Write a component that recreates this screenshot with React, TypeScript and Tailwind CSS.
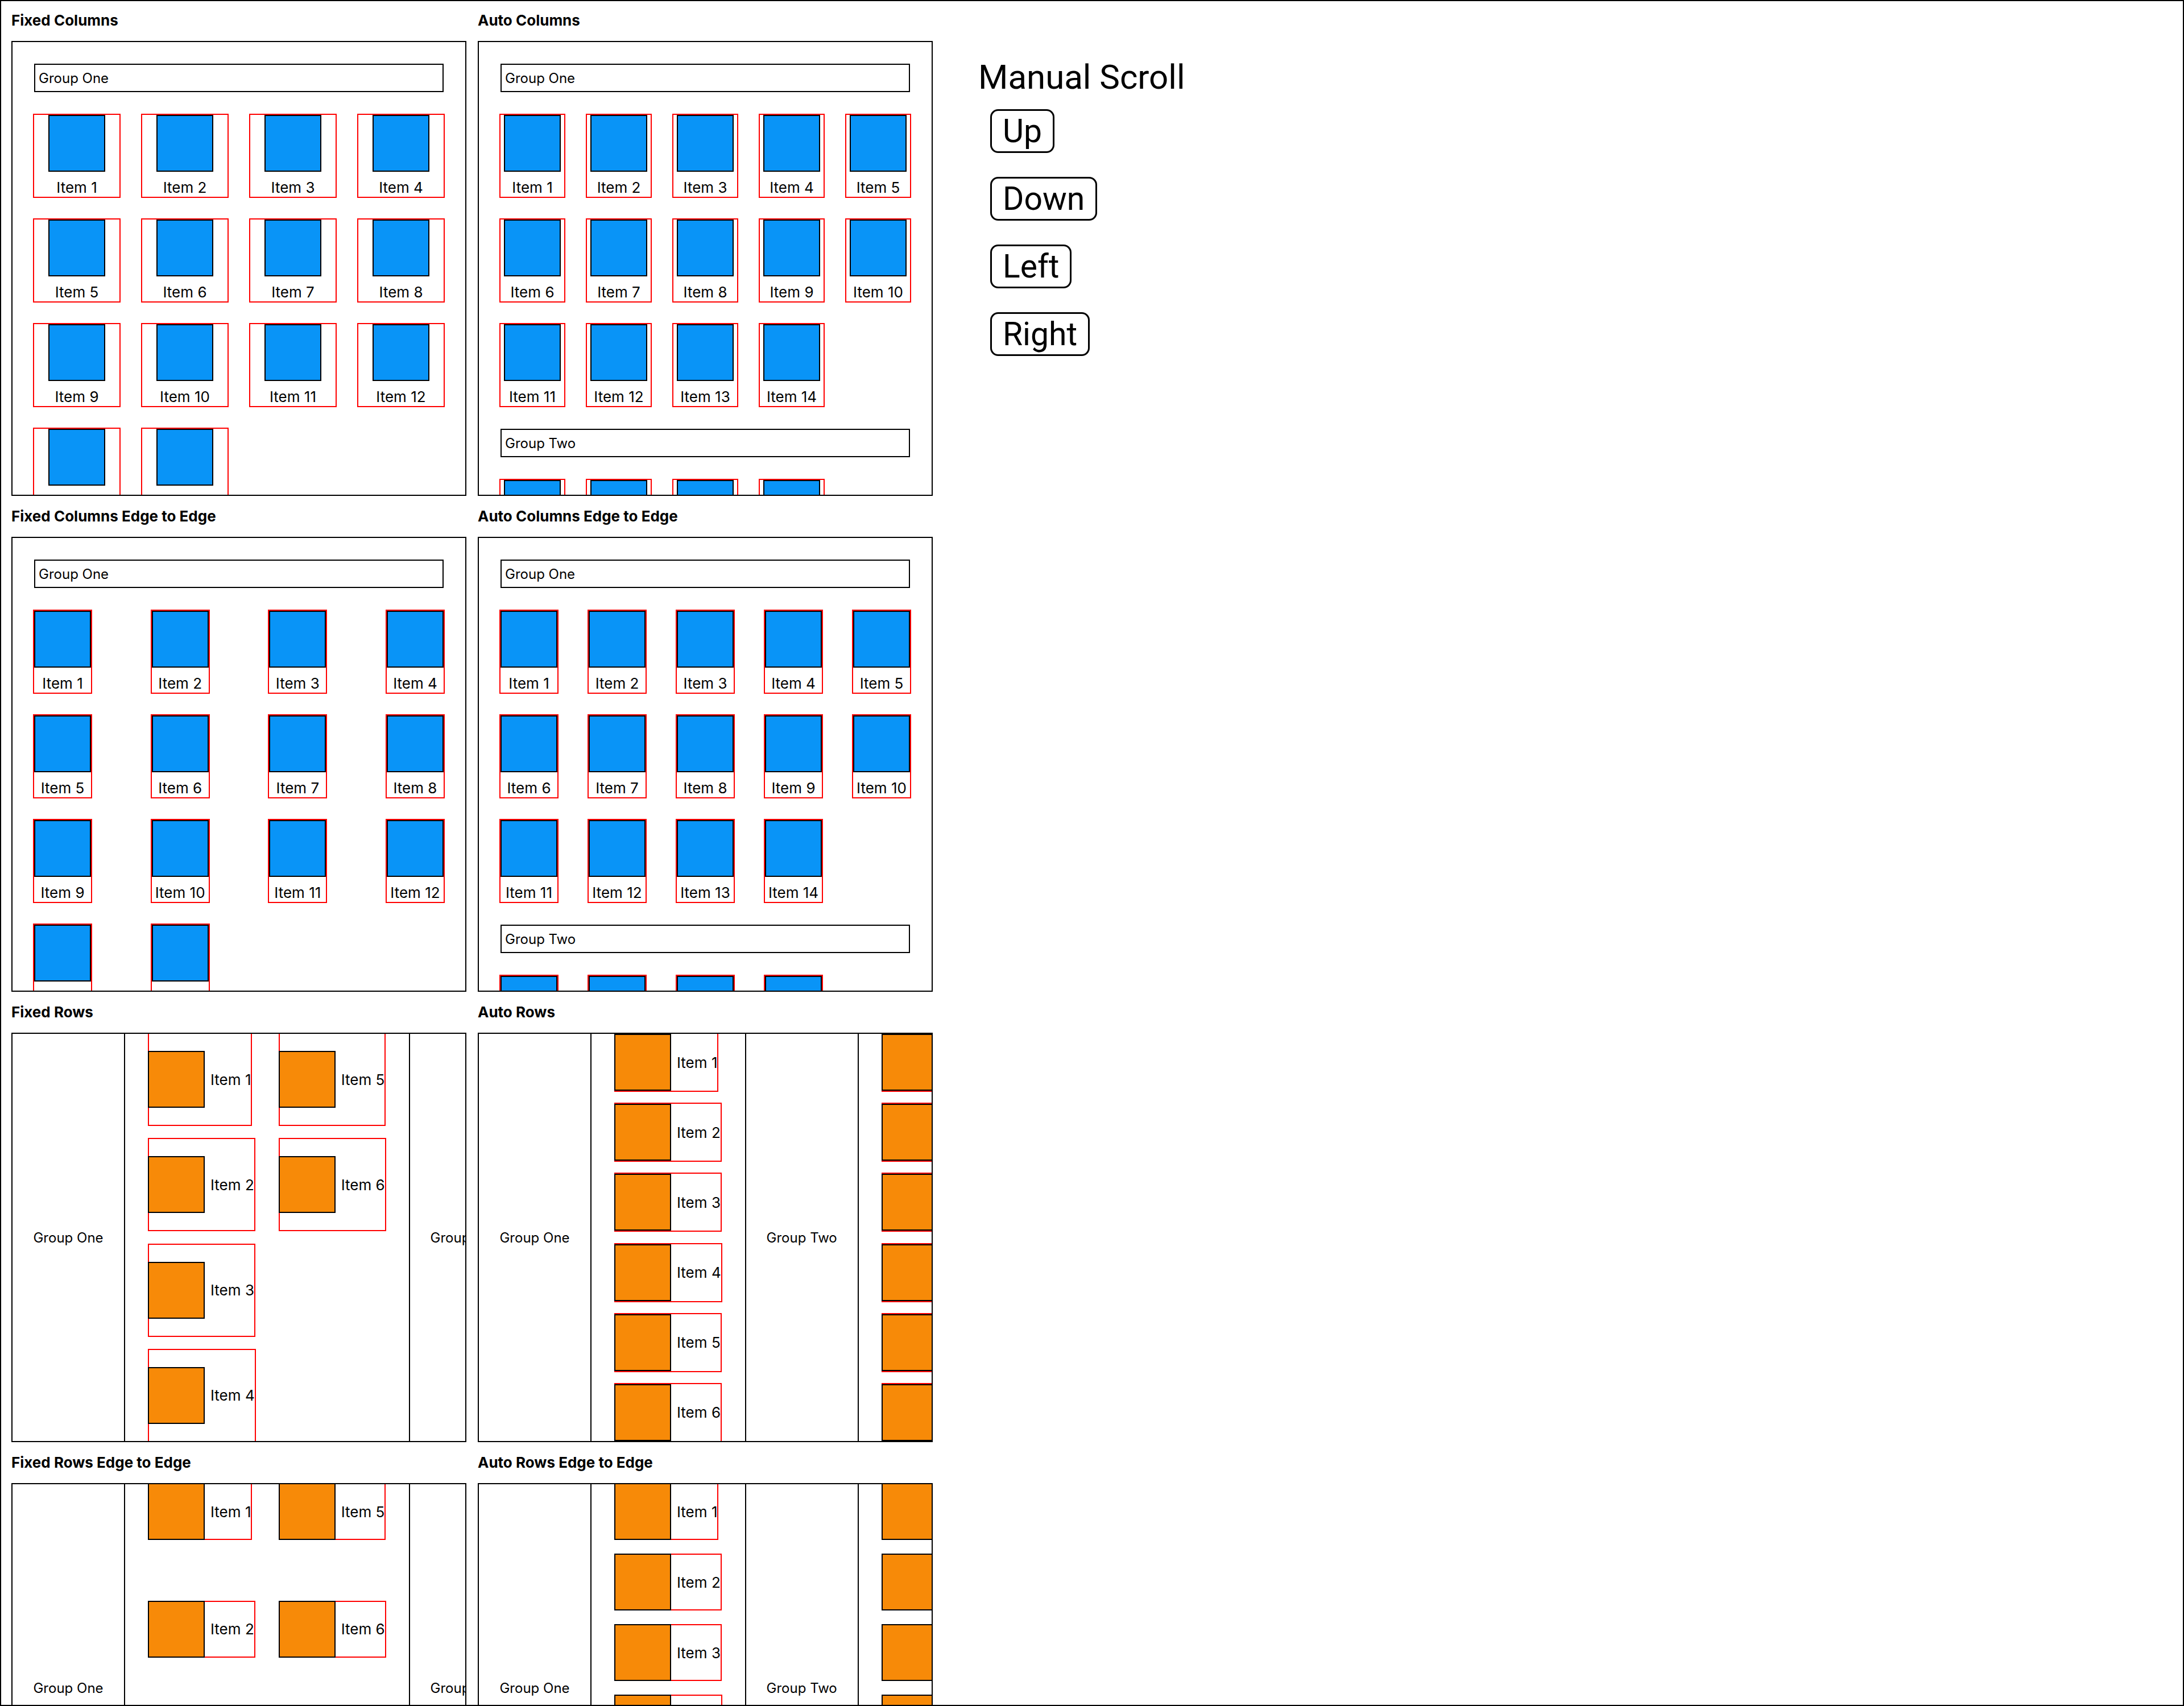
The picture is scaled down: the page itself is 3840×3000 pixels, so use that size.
import React from "react";

const range = (n: number) => Array.from({ length: n }, (_, i) => i + 1);

type ColMode = "fixed" | "auto" | "fixedEdge" | "autoEdge";
type RowMode = "fixed" | "auto" | "fixedEdge" | "autoEdge";

function BlueSquare() {
  return <div className="h-[100px] w-[100px] shrink-0 border-2 border-black bg-[#0994f7]" />;
}

function OrangeSquare() {
  return <div className="-ml-[2px] h-[100px] w-[100px] shrink-0 border-2 border-black bg-[#f78a08]" />;
}

function ColItem({ n, edge }: { n: number; edge: boolean }) {
  return (
    <div
      className={
        edge
          ? "flex h-[144px] w-[100px] flex-col items-center outline-2 outline-[#ff0000]"
          : "flex h-[144px] flex-col items-center outline-2 outline-[#ff0000]"
      }
    >
      <BlueSquare />
      <div className="whitespace-nowrap pt-[12px] text-[26px] leading-[31px] text-black">Item {n}</div>
    </div>
  );
}

function ColHeader({ children }: { children: React.ReactNode }) {
  return (
    <div className="flex h-[50px] items-center border-2 border-black px-[6px] text-[24px] leading-[29px] text-black">
      {children}
    </div>
  );
}

function ColGrid({ mode, count }: { mode: ColMode; count: number }) {
  const cls =
    mode === "fixed"
      ? "grid grid-cols-[repeat(4,150px)] gap-10"
      : mode === "auto"
      ? "grid grid-cols-5 gap-10"
      : mode === "fixedEdge"
      ? "grid grid-cols-[repeat(4,100px)] justify-between gap-y-10"
      : "grid grid-cols-[repeat(5,100px)] justify-between gap-y-10";
  const edge = mode === "fixedEdge" || mode === "autoEdge";
  return (
    <div className={cls}>
      {range(count).map((n) => (
        <ColItem key={n} n={n} edge={edge} />
      ))}
    </div>
  );
}

function ColPanel({ mode }: { mode: ColMode }) {
  return (
    <div className="h-[800px] w-[800px] overflow-hidden border-2 border-black">
      <div className="flex flex-col gap-10 p-[38px]">
        <ColHeader>Group One</ColHeader>
        <ColGrid mode={mode} count={14} />
        <ColHeader>Group Two</ColHeader>
        <ColGrid mode={mode} count={4} />
      </div>
    </div>
  );
}

function RowItem({ n, mode }: { n: number; mode: RowMode }) {
  const h =
    mode === "fixed"
      ? "flex h-[164px] items-center border-2 border-[#ff0000]"
      : mode === "auto"
      ? "flex h-[104px] items-center border-2 border-[#ff0000]"
      : "flex h-[100px] items-center border-2 border-[#ff0000]";
  return (
    <div className={h}>
      <OrangeSquare />
      <div className="whitespace-nowrap pl-[10px] text-[26px] leading-[31px] text-black">Item {n}</div>
    </div>
  );
}

function RowHeader({ children }: { children: React.ReactNode }) {
  return (
    <div className="flex h-full w-[200px] shrink-0 items-center justify-center border-2 border-black text-[24px] leading-[29px] text-black">
      {children}
    </div>
  );
}

function RowGrid({ mode }: { mode: RowMode }) {
  const cls =
    mode === "fixed" || mode === "fixedEdge"
      ? "grid h-full shrink-0 grid-flow-col grid-rows-[repeat(4,auto)] auto-cols-max content-between justify-items-start gap-x-10"
      : "grid h-full shrink-0 grid-flow-col grid-rows-[repeat(6,auto)] auto-cols-max content-between justify-items-start gap-x-10";
  return (
    <div className={cls}>
      {range(6).map((n) => (
        <RowItem key={n} n={n} mode={mode} />
      ))}
    </div>
  );
}

function RowPanel({ mode }: { mode: RowMode }) {
  return (
    <div className="h-[720px] w-[800px] overflow-hidden border-2 border-black">
      <div className="-m-[2px] flex h-[720px] gap-10">
        <RowHeader>Group One</RowHeader>
        <RowGrid mode={mode} />
        <RowHeader>Group Two</RowHeader>
        <RowGrid mode={mode} />
      </div>
    </div>
  );
}

function Section({ title, children }: { title: string; children: React.ReactNode }) {
  return (
    <div className="flex flex-col gap-5">
      <div className="h-8 text-[26px] font-bold leading-8 text-black">{title}</div>
      {children}
    </div>
  );
}

function ScrollButton({ label }: { label: string }) {
  return (
    <button
      type="button"
      className="flex h-[77px] items-center rounded-[14px] border-[3px] border-black bg-white px-[19px] text-[57px] leading-none text-black"
    >
      {label}
    </button>
  );
}

export default function App() {
  return (
    <div className="flex h-[3000px] w-[3840px] items-start overflow-hidden border-2 border-black bg-white pl-[18px] pt-[18px] font-['Inter','Noto_Sans',sans-serif]">
      <div className="grid shrink-0 grid-cols-[800px_800px] gap-5">
        <Section title="Fixed Columns">
          <ColPanel mode="fixed" />
        </Section>
        <Section title="Auto Columns">
          <ColPanel mode="auto" />
        </Section>
        <Section title="Fixed Columns Edge to Edge">
          <ColPanel mode="fixedEdge" />
        </Section>
        <Section title="Auto Columns Edge to Edge">
          <ColPanel mode="autoEdge" />
        </Section>
        <Section title="Fixed Rows">
          <RowPanel mode="fixed" />
        </Section>
        <Section title="Auto Rows">
          <RowPanel mode="auto" />
        </Section>
        <Section title="Fixed Rows Edge to Edge">
          <RowPanel mode="fixedEdge" />
        </Section>
        <Section title="Auto Rows Edge to Edge">
          <RowPanel mode="autoEdge" />
        </Section>
      </div>
      <div className="ml-[80px] flex flex-col items-start pt-[81px] font-['Roboto',sans-serif]">
        <div className="text-[60px] leading-[70px] text-black">Manual Scroll</div>
        <div className="ml-[21px] mt-[21px] flex flex-col items-start gap-[42px]">
          <ScrollButton label="Up" />
          <ScrollButton label="Down" />
          <ScrollButton label="Left" />
          <ScrollButton label="Right" />
        </div>
      </div>
    </div>
  );
}
